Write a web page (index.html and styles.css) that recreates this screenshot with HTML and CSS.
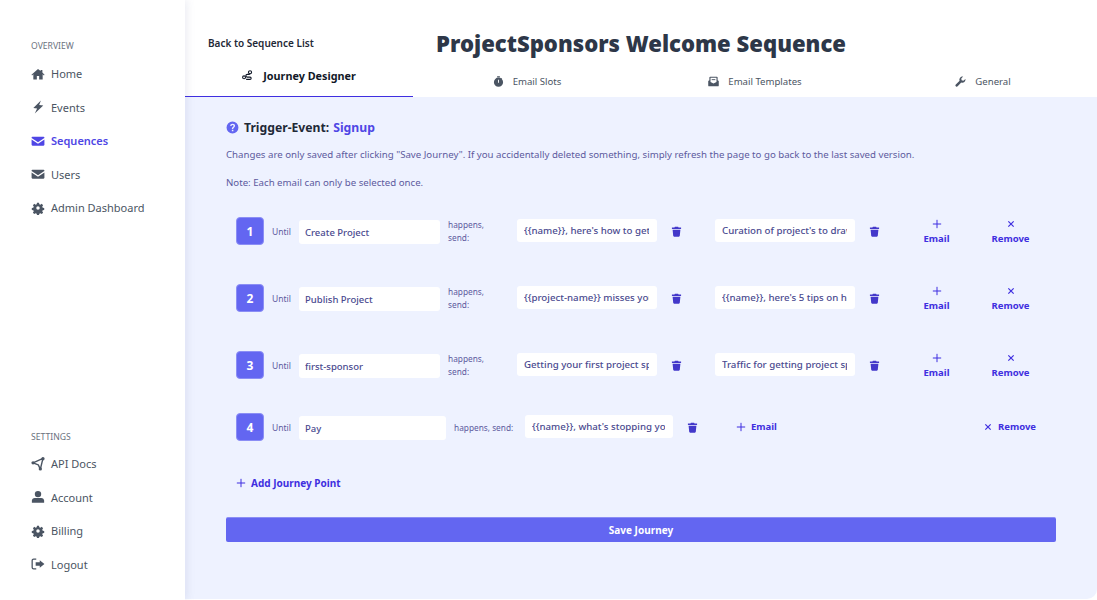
FILE: index.html
```html
<!DOCTYPE html>
<html lang="en">
<head>
    <meta charset="UTF-8">
    <title>ProjectSponsors Welcome Sequence</title>
    <link rel="stylesheet" href="styles.css">
</head>
<body>
    <svg class="sprite" xmlns="http://www.w3.org/2000/svg">
        <symbol id="i-home" viewBox="0 0 24 24"><path d="M12 3.500 0.800 13.200l1 1.200L4 12.600V21.500h6v-6h4v6h6v-8.900l2.200 1.800 1-1.200L19.500 9.500V5h-3v2L12 3.500z"/></symbol>
        <symbol id="i-bolt" viewBox="0 0 24 24"><path d="M17 1 4 13.500l6.500 1-4 8.500L21 9.500l-7-.8L17 1z"/></symbol>
        <symbol id="i-mail" viewBox="0 0 24 24"><path d="M2.500 4.500h19c.8 0 1.500.7 1.500 1.500v.8L12 14 1 6.800V6c0-.8.7-1.500 1.500-1.500z"/><path d="M1 9.300 12 16.500l11-7.200v9.200c0 .8-.7 1.500-1.500 1.500h-19c-.8 0-1.500-.7-1.500-1.500V9.300z"/></symbol>
        <symbol id="i-cog" viewBox="-2 -2 28 28"><path fill-rule="evenodd" d="M10 1.500h4l.6 3 2.200.9 2.600-1.700 2.800 2.800-1.700 2.600.9 2.200 3 .6v4l-3 .6-.9 2.200 1.700 2.600-2.800 2.800-2.600-1.700-2.200.9-.6 3h-4l-.6-3-2.200-.9-2.600 1.700-2.800-2.800 1.700-2.600-.9-2.200-3-.6v-4l3-.6.9-2.200-1.700-2.600 2.800-2.800 2.600 1.700 2.200-.9.6-3zM12 8.500a3.500 3.500 0 1 0 0 7 3.500 3.500 0 0 0 0-7z"/></symbol>
        <symbol id="i-nodes" viewBox="0 0 24 24"><path d="M20.500 2.500 3.500 10l9 3.500 3.500 7.500 4.500-18.500z" fill="none" stroke="currentColor" stroke-width="2.400" stroke-linejoin="round"/><circle cx="20.500" cy="3" r="2.800"/><circle cx="3.500" cy="10" r="2.800"/><circle cx="16" cy="20.500" r="2.800"/></symbol>
        <symbol id="i-user" viewBox="0 0 24 24"><circle cx="12" cy="7" r="5.500"/><path d="M6.500 13.500h11c3 0 5 2.200 5 5V22h-21v-3.500c0-2.800 2-5 5-5z"/></symbol>
        <symbol id="i-logout" viewBox="0 0 24 24"><path d="M9 3.500H4.500A2.500 2.500 0 0 0 2 6v12a2.500 2.500 0 0 0 2.500 2.500H9" fill="none" stroke="currentColor" stroke-width="2.200"/><path d="M15 5.500 23 12l-8 6.500V15H8V9h7V5.500z"/></symbol>
        <symbol id="i-route" viewBox="0 0 24 24"><path d="M17 9.500h-5.500a3 3 0 0 0 0 6h6a2.500 2.500 0 0 1 0 5H9" fill="none" stroke="currentColor" stroke-width="2.400"/><circle cx="17.500" cy="5" r="3.400" fill="none" stroke="currentColor" stroke-width="2.400"/><circle cx="4.500" cy="16" r="3.200" fill="none" stroke="currentColor" stroke-width="2.400"/></symbol>
        <symbol id="i-watch" viewBox="0 0 24 24"><rect x="9" y="0.500" width="6" height="2.500"/><path d="m18 4.500 2 2-1.500 1.500-2-2z"/><path fill-rule="evenodd" d="M12 3.500a10 10 0 1 1 0 20 10 10 0 0 1 0-20zM11 8v6.500h2V8h-2z"/></symbol>
        <symbol id="i-open" viewBox="0 0 24 24"><path fill-rule="evenodd" d="M5 1.500h14a2 2 0 0 1 2 2V9l2.500 2v9.500a2 2 0 0 1-2 2h-19a2 2 0 0 1-2-2V11L3 9V3.500a2 2 0 0 1 2-2zM5.500 4v9l6.500 3.500 6.500-3.500V4h-13z"/><rect x="8" y="7" width="8" height="2"/></symbol>
        <symbol id="i-wrench" viewBox="0 0 24 24"><path d="M22.800 6.500a6.800 6.800 0 0 1-9.200 7.500L5.800 22.500a2.600 2.600 0 0 1-3.900-.1 2.600 2.600 0 0 1-.1-3.800l8.300-8A6.800 6.800 0 0 1 17.800 1.300L13.700 5.500l.7 3.800 3.800.8 4.600-3.600z"/></symbol>
        <symbol id="i-help" viewBox="0 0 24 24"><path fill-rule="evenodd" d="M12 1a11 11 0 1 1 0 22 11 11 0 0 1 0-22zM10.800 16.200v2.800h2.800v-2.800h-2.800zM12.200 5c-2.700 0-4.400 1.500-4.700 3.800l2.600.4c.2-1.200.9-1.800 2-1.800 1.100 0 1.900.6 1.900 1.600 0 .8-.5 1.200-1.400 1.900-1.200.9-1.800 1.700-1.800 3.100v.6h2.600v-.4c0-.8.3-1.100 1.200-1.800 1.200-.9 2.100-1.800 2.100-3.500C16.700 6.500 14.900 5 12.200 5z"/></symbol>
        <symbol id="i-trash" viewBox="0 0 24 24"><path d="M8.500 1.500h7l1 2H22v3H2v-3h5.500l1-2z"/><path d="M3.500 8h17l-1.300 13.500a2 2 0 0 1-2 1.800H6.800a2 2 0 0 1-2-1.800L3.500 8z"/></symbol>
        <symbol id="i-plus" viewBox="0 0 24 24"><path d="M12 2v20M2 12h20" fill="none" stroke="currentColor" stroke-width="2.400"/></symbol>
        <symbol id="i-times" viewBox="-3 -3 30 30"><path d="M4 4l16 16M20 4 4 20" fill="none" stroke="currentColor" stroke-width="3.600"/></symbol>
    </svg>

    <div class="app">
        <aside class="sidebar">
            <nav class="side-group">
                <h6>Overview</h6>
                <a class="side-link"><svg class="icon"><use href="#i-home"/></svg>Home</a>
                <a class="side-link"><svg class="icon"><use href="#i-bolt"/></svg>Events</a>
                <a class="side-link active"><svg class="icon"><use href="#i-mail"/></svg>Sequences</a>
                <a class="side-link"><svg class="icon"><use href="#i-mail"/></svg>Users</a>
                <a class="side-link"><svg class="icon"><use href="#i-cog"/></svg>Admin Dashboard</a>
            </nav>
            <nav class="side-group">
                <h6>Settings</h6>
                <a class="side-link"><svg class="icon"><use href="#i-nodes"/></svg>API Docs</a>
                <a class="side-link"><svg class="icon"><use href="#i-user"/></svg>Account</a>
                <a class="side-link"><svg class="icon"><use href="#i-cog"/></svg>Billing</a>
                <a class="side-link"><svg class="icon"><use href="#i-logout"/></svg>Logout</a>
            </nav>
        </aside>

        <main class="main">
            <header class="top">
                <a class="back">Back to Sequence List</a>
                <h1>ProjectSponsors Welcome Sequence</h1>
            </header>

            <div class="tabs">
                <a class="tab active"><svg class="icon"><use href="#i-route"/></svg>Journey Designer</a>
                <a class="tab"><svg class="icon"><use href="#i-watch"/></svg>Email Slots</a>
                <a class="tab"><svg class="icon"><use href="#i-open"/></svg>Email Templates</a>
                <a class="tab"><svg class="icon"><use href="#i-wrench"/></svg>General</a>
            </div>

            <section class="content">
                <h2 class="trigger"><svg class="icon"><use href="#i-help"/></svg>Trigger-Event: <span>Signup</span></h2>
                <p class="note">Changes are only saved after clicking "Save Journey". If you accidentally deleted something, simply refresh the page to go back to the last saved version.</p>
                <p class="note">Note: Each email can only be selected once.</p>

                <div class="journey">
                    <div class="point">
                        <div class="num">1</div>
                        <span class="until">Until</span>
                        <input class="event" value="Create Project">
                        <span class="happens">happens, send:</span>
                        <input class="mail" value="{{name}}, here's how to get started">
                        <a class="trash"><svg class="icon"><use href="#i-trash"/></svg></a>
                        <input class="mail" value="Curation of project's to draw sponsors">
                        <a class="trash"><svg class="icon"><use href="#i-trash"/></svg></a>
                        <a class="act add"><svg class="icon"><use href="#i-plus"/></svg>Email</a>
                        <a class="act rem"><svg class="icon"><use href="#i-times"/></svg>Remove</a>
                    </div>
                    <div class="point">
                        <div class="num">2</div>
                        <span class="until">Until</span>
                        <input class="event" value="Publish Project">
                        <span class="happens">happens, send:</span>
                        <input class="mail" value="{{project-name}} misses you already">
                        <a class="trash"><svg class="icon"><use href="#i-trash"/></svg></a>
                        <input class="mail" value="{{name}}, here's 5 tips on how to grow">
                        <a class="trash"><svg class="icon"><use href="#i-trash"/></svg></a>
                        <a class="act add"><svg class="icon"><use href="#i-plus"/></svg>Email</a>
                        <a class="act rem"><svg class="icon"><use href="#i-times"/></svg>Remove</a>
                    </div>
                    <div class="point">
                        <div class="num">3</div>
                        <span class="until">Until</span>
                        <input class="event" value="first-sponsor">
                        <span class="happens">happens, send:</span>
                        <input class="mail" value="Getting your first project sponsor">
                        <a class="trash"><svg class="icon"><use href="#i-trash"/></svg></a>
                        <input class="mail" value="Traffic for getting project sponsors">
                        <a class="trash"><svg class="icon"><use href="#i-trash"/></svg></a>
                        <a class="act add"><svg class="icon"><use href="#i-plus"/></svg>Email</a>
                        <a class="act rem"><svg class="icon"><use href="#i-times"/></svg>Remove</a>
                    </div>
                    <div class="point wide">
                        <div class="num">4</div>
                        <span class="until">Until</span>
                        <input class="event" value="Pay">
                        <span class="happens">happens, send:</span>
                        <input class="mail" value="{{name}}, what's stopping you from upgrading">
                        <a class="trash"><svg class="icon"><use href="#i-trash"/></svg></a>
                        <a class="act add"><svg class="icon"><use href="#i-plus"/></svg>Email</a>
                        <a class="act rem"><svg class="icon"><use href="#i-times"/></svg>Remove</a>
                    </div>
                </div>

                <a class="add-point"><svg class="icon"><use href="#i-plus"/></svg>Add Journey Point</a>
                <button class="save">Save Journey</button>
            </section>
        </main>
    </div>
</body>
</html>
```

FILE: styles.css
```css
:root {
    --indigo: #6366f1;
    --indigo-dark: #4338ca;
    --link: #3f2fe0;
    --grey: #4b5563;
    --tint: #eef2ff;
    --note: #5d5a9e;
}

* {
    box-sizing: border-box;
}

body {
    margin: 0;
    background: #fff;
    font-family: "Noto Sans", "Open Sans", sans-serif;
    color: var(--grey);
}

.sprite {
    display: none;
}

.icon {
    width: 14px;
    height: 14px;
    fill: currentColor;
    flex: none;
}

.app {
    display: flex;
    height: 600px;
    overflow: hidden;
}

/* sidebar */
.sidebar {
    width: 185px;
    flex: none;
    padding: 40px 0 19px 31px;
    display: flex;
    flex-direction: column;
    justify-content: space-between;
    box-shadow: 2px 0 8px rgba(90, 100, 160, 0.12);
    position: relative;
}

.side-group h6 {
    margin: 0 0 5px;
    font-size: 8.6px;
    line-height: 12px;
    font-weight: 400;
    text-transform: uppercase;
    color: #6b7280;
}

.side-group:last-child h6 {
    margin-bottom: 4px;
}

.side-link {
    display: flex;
    align-items: center;
    gap: 6px;
    height: 33.5px;
    font-size: 11px;
}

.side-link.active {
    color: #4f46e5;
    font-weight: 600;
}

/* header + tabs */
.main {
    flex: 1;
    display: flex;
    flex-direction: column;
    min-width: 0;
}

.top {
    height: 62px;
    padding: 36px 0 0 23px;
    position: relative;
}

.back {
    font-size: 10px;
    line-height: 14px;
    font-weight: 600;
    color: #1f2937;
    display: block;
}

.top h1 {
    position: absolute;
    left: 0;
    right: 0;
    top: 27px;
    margin: 0;
    text-align: center;
    font-size: 22.1px;
    line-height: 32px;
    font-weight: 900;
    color: #2d3748;
}

.tabs {
    display: grid;
    grid-template-columns: repeat(4, 228px);
    height: 35px;
}

.tab {
    display: flex;
    align-items: center;
    justify-content: center;
    gap: 9px;
    padding-top: 3px;
    font-size: 9.6px;
}

.tab .icon {
    width: 11px;
    height: 11px;
}

.tab.active {
    gap: 10px;
    padding: 0 0 7px;
    border-bottom: 1px solid var(--link);
    color: #111827;
    font-weight: 700;
    font-size: 10.8px;
}

/* content */
.content {
    flex: 1;
    background: var(--tint);
    border-bottom-right-radius: 10px;
    margin-bottom: 1px;
    padding: 21px 41px 0;
}

.trigger {
    margin: 0 0 11px;
    display: flex;
    align-items: center;
    gap: 4px;
    height: 18px;
    font-size: 12.2px;
    font-weight: 700;
    color: #1f2937;
}

.trigger .icon {
    width: 13px;
    height: 13px;
    margin-right: 1px;
    color: var(--indigo);
}

.trigger span {
    color: #4f46e5;
}

.note {
    margin: 0 0 13px;
    font-size: 9.67px;
    line-height: 15px;
    color: var(--note);
}

.journey {
    padding: 14px 0 0 10px;
}

.point {
    display: flex;
    align-items: center;
    height: 28px;
    margin-bottom: 39px;
}

.point:last-child {
    margin: -5px 0 0;
}

.num {
    width: 28px;
    height: 28px;
    flex: none;
    display: flex;
    align-items: center;
    justify-content: center;
    background: var(--indigo);
    border: 1px solid #8b8ef5;
    border-radius: 4px;
    color: #fff;
    font-size: 12px;
    font-weight: 700;
}

.until {
    width: 35px;
    padding-left: 8px;
    flex: none;
    font-size: 8.5px;
    color: var(--note);
}

input {
    border: 0;
    outline: 0;
    background: #fff;
    border-radius: 3px;
    padding: 0 8px 0 6px;
    font-family: inherit;
    font-size: 9.7px;
    font-weight: 500;
    color: #4a4a8f;
}

.event {
    width: 141px;
    height: 24px;
    margin-top: 2px;
    font-size: 9.5px;
}

.happens {
    width: 77px;
    padding: 0 30px 0 8px;
    flex: none;
    font-size: 8.3px;
    line-height: 13px;
    color: var(--note);
}

.mail {
    width: 140px;
    height: 23px;
    margin-top: -1px;
    padding-left: 7px;
}

.trash {
    width: 58px;
    padding-left: 14px;
    flex: none;
    display: flex;
    color: var(--indigo-dark);
}

.trash .icon {
    width: 11px;
    height: 11px;
}

.act {
    flex: none;
    display: flex;
    flex-direction: column;
    align-items: center;
    gap: 4px;
    color: var(--link);
    font-size: 9.5px;
    font-weight: 700;
    line-height: 12px;
}

.act .icon {
    width: 10px;
    height: 10px;
}

.add {
    width: 45px;
    margin-left: 1px;
    margin-top: 2px;
}

.rem {
    width: 55px;
    margin-left: 24px;
    margin-top: 2px;
}

/* last row sits on one line */
.wide .event {
    width: 147px;
}

.wide .happens {
    width: 79px;
    padding-right: 0;
}

.wide .mail {
    width: 148px;
}

.wide .trash {
    width: 63px;
}

.wide .act {
    flex-direction: row;
    gap: 5px;
    margin-top: 0;
}

.wide .add {
    width: auto;
    margin-left: 0;
}

.wide .rem {
    width: auto;
    margin-left: auto;
    margin-right: 20px;
}

.add-point {
    margin: 35px 0 0 10px;
    display: flex;
    align-items: center;
    gap: 5px;
    height: 14px;
    color: var(--link);
    font-size: 10px;
    font-weight: 700;
}

.add-point .icon {
    width: 10px;
    height: 10px;
}

.save {
    display: block;
    width: 830px;
    height: 25px;
    margin-top: 27px;
    border: 0;
    border-top: 1px solid #8b8ef5;
    border-radius: 2px;
    background: var(--indigo);
    color: #fff;
    font-family: inherit;
    font-size: 10px;
    font-weight: 700;
}
```
